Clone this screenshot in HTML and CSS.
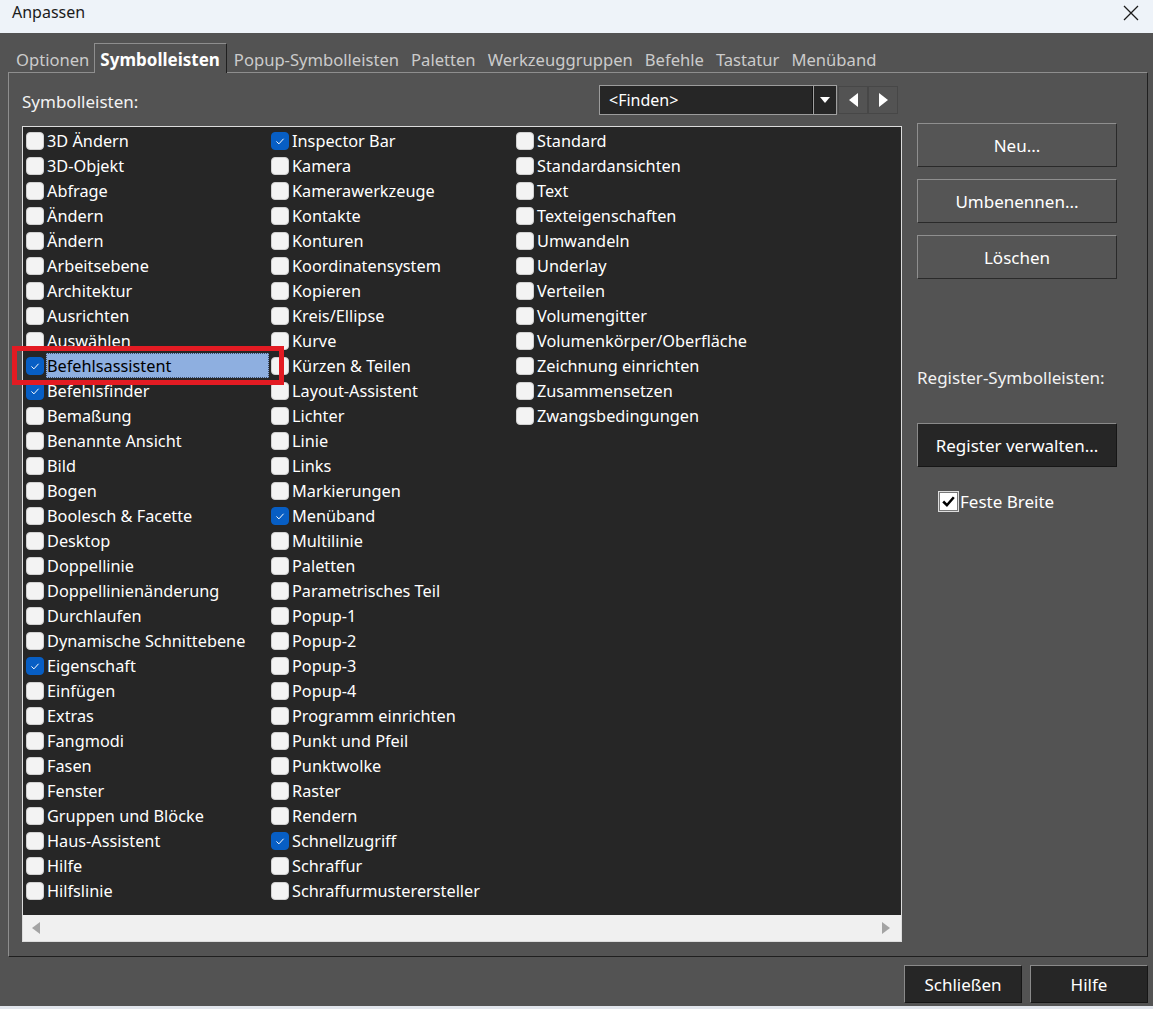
FILE: index.html
```html
<!DOCTYPE html>
<html lang="de">
<head>
<meta charset="UTF-8">
<title>Anpassen</title>
<link rel="stylesheet" href="styles.css">
</head>
<body>

<div class="titlebar">
    <span class="title">Anpassen</span>
    <svg class="close" width="16" height="16" viewBox="0 0 16 16"><path d="M1 1 L15 15 M15 1 L1 15" stroke="#1b1b1b" stroke-width="1.3" fill="none"/></svg>
</div>

<div class="dialog">
    <div class="tabs">
        <span class="tab">Optionen</span>
        <span class="tab active">Symbolleisten</span>
        <span class="tab">Popup-Symbolleisten</span>
        <span class="tab">Paletten</span>
        <span class="tab">Werkzeuggruppen</span>
        <span class="tab">Befehle</span>
        <span class="tab">Tastatur</span>
        <span class="tab">Menüband</span>
    </div>

    <div class="panel">
        <div class="left">
            <div class="toprow">
                <span class="label">Symbolleisten:</span>
                <div class="combo">
                    <span class="combo-text">&lt;Finden&gt;</span>
                    <span class="combo-drop"><svg width="10" height="6" viewBox="0 0 10 6"><path d="M0 0 H10 L5 6 Z" fill="#fff"/></svg></span>
                </div>
                <span class="navbtn"><svg width="9" height="14" viewBox="0 0 9 14"><path d="M9 0 V14 L0 7 Z" fill="#fff"/></svg></span>
                <span class="navbtn"><svg width="9" height="14" viewBox="0 0 9 14"><path d="M0 0 V14 L9 7 Z" fill="#fff"/></svg></span>
            </div>

            <div class="listbox">
                <div class="columns">
                    <div class="col">
                        <div class="item"><span class="cb"></span><span class="text">3D Ändern</span></div>
                        <div class="item"><span class="cb"></span><span class="text">3D-Objekt</span></div>
                        <div class="item"><span class="cb"></span><span class="text">Abfrage</span></div>
                        <div class="item"><span class="cb"></span><span class="text">Ändern</span></div>
                        <div class="item"><span class="cb"></span><span class="text">Ändern</span></div>
                        <div class="item"><span class="cb"></span><span class="text">Arbeitsebene</span></div>
                        <div class="item"><span class="cb"></span><span class="text">Architektur</span></div>
                        <div class="item"><span class="cb"></span><span class="text">Ausrichten</span></div>
                        <div class="item"><span class="cb"></span><span class="text">Auswählen</span></div>
                        <div class="item"><span class="cb on"><svg viewBox="0 0 18 18"><path d="M5 9.5 L7.8 12.2 L13 6.5" /></svg></span><span class="text selected">Befehlsassistent</span></div>
                        <div class="item"><span class="cb on"><svg viewBox="0 0 18 18"><path d="M5 9.5 L7.8 12.2 L13 6.5" /></svg></span><span class="text">Befehlsfinder</span></div>
                        <div class="item"><span class="cb"></span><span class="text">Bemaßung</span></div>
                        <div class="item"><span class="cb"></span><span class="text">Benannte Ansicht</span></div>
                        <div class="item"><span class="cb"></span><span class="text">Bild</span></div>
                        <div class="item"><span class="cb"></span><span class="text">Bogen</span></div>
                        <div class="item"><span class="cb"></span><span class="text">Boolesch &amp; Facette</span></div>
                        <div class="item"><span class="cb"></span><span class="text">Desktop</span></div>
                        <div class="item"><span class="cb"></span><span class="text">Doppellinie</span></div>
                        <div class="item"><span class="cb"></span><span class="text">Doppellinienänderung</span></div>
                        <div class="item"><span class="cb"></span><span class="text">Durchlaufen</span></div>
                        <div class="item"><span class="cb"></span><span class="text">Dynamische Schnittebene</span></div>
                        <div class="item"><span class="cb on"><svg viewBox="0 0 18 18"><path d="M5 9.5 L7.8 12.2 L13 6.5" /></svg></span><span class="text">Eigenschaft</span></div>
                        <div class="item"><span class="cb"></span><span class="text">Einfügen</span></div>
                        <div class="item"><span class="cb"></span><span class="text">Extras</span></div>
                        <div class="item"><span class="cb"></span><span class="text">Fangmodi</span></div>
                        <div class="item"><span class="cb"></span><span class="text">Fasen</span></div>
                        <div class="item"><span class="cb"></span><span class="text">Fenster</span></div>
                        <div class="item"><span class="cb"></span><span class="text">Gruppen und Blöcke</span></div>
                        <div class="item"><span class="cb"></span><span class="text">Haus-Assistent</span></div>
                        <div class="item"><span class="cb"></span><span class="text">Hilfe</span></div>
                        <div class="item"><span class="cb"></span><span class="text">Hilfslinie</span></div>
                    </div>
                    <div class="col">
                        <div class="item"><span class="cb on"><svg viewBox="0 0 18 18"><path d="M5 9.5 L7.8 12.2 L13 6.5" /></svg></span><span class="text">Inspector Bar</span></div>
                        <div class="item"><span class="cb"></span><span class="text">Kamera</span></div>
                        <div class="item"><span class="cb"></span><span class="text">Kamerawerkzeuge</span></div>
                        <div class="item"><span class="cb"></span><span class="text">Kontakte</span></div>
                        <div class="item"><span class="cb"></span><span class="text">Konturen</span></div>
                        <div class="item"><span class="cb"></span><span class="text">Koordinatensystem</span></div>
                        <div class="item"><span class="cb"></span><span class="text">Kopieren</span></div>
                        <div class="item"><span class="cb"></span><span class="text">Kreis/Ellipse</span></div>
                        <div class="item"><span class="cb"></span><span class="text">Kurve</span></div>
                        <div class="item"><span class="cb"></span><span class="text">Kürzen &amp; Teilen</span></div>
                        <div class="item"><span class="cb"></span><span class="text">Layout-Assistent</span></div>
                        <div class="item"><span class="cb"></span><span class="text">Lichter</span></div>
                        <div class="item"><span class="cb"></span><span class="text">Linie</span></div>
                        <div class="item"><span class="cb"></span><span class="text">Links</span></div>
                        <div class="item"><span class="cb"></span><span class="text">Markierungen</span></div>
                        <div class="item"><span class="cb on"><svg viewBox="0 0 18 18"><path d="M5 9.5 L7.8 12.2 L13 6.5" /></svg></span><span class="text">Menüband</span></div>
                        <div class="item"><span class="cb"></span><span class="text">Multilinie</span></div>
                        <div class="item"><span class="cb"></span><span class="text">Paletten</span></div>
                        <div class="item"><span class="cb"></span><span class="text">Parametrisches Teil</span></div>
                        <div class="item"><span class="cb"></span><span class="text">Popup-1</span></div>
                        <div class="item"><span class="cb"></span><span class="text">Popup-2</span></div>
                        <div class="item"><span class="cb"></span><span class="text">Popup-3</span></div>
                        <div class="item"><span class="cb"></span><span class="text">Popup-4</span></div>
                        <div class="item"><span class="cb"></span><span class="text">Programm einrichten</span></div>
                        <div class="item"><span class="cb"></span><span class="text">Punkt und Pfeil</span></div>
                        <div class="item"><span class="cb"></span><span class="text">Punktwolke</span></div>
                        <div class="item"><span class="cb"></span><span class="text">Raster</span></div>
                        <div class="item"><span class="cb"></span><span class="text">Rendern</span></div>
                        <div class="item"><span class="cb on"><svg viewBox="0 0 18 18"><path d="M5 9.5 L7.8 12.2 L13 6.5" /></svg></span><span class="text">Schnellzugriff</span></div>
                        <div class="item"><span class="cb"></span><span class="text">Schraffur</span></div>
                        <div class="item"><span class="cb"></span><span class="text">Schraffurmusterersteller</span></div>
                    </div>
                    <div class="col">
                        <div class="item"><span class="cb"></span><span class="text">Standard</span></div>
                        <div class="item"><span class="cb"></span><span class="text">Standardansichten</span></div>
                        <div class="item"><span class="cb"></span><span class="text">Text</span></div>
                        <div class="item"><span class="cb"></span><span class="text">Texteigenschaften</span></div>
                        <div class="item"><span class="cb"></span><span class="text">Umwandeln</span></div>
                        <div class="item"><span class="cb"></span><span class="text">Underlay</span></div>
                        <div class="item"><span class="cb"></span><span class="text">Verteilen</span></div>
                        <div class="item"><span class="cb"></span><span class="text">Volumengitter</span></div>
                        <div class="item"><span class="cb"></span><span class="text">Volumenkörper/Oberfläche</span></div>
                        <div class="item"><span class="cb"></span><span class="text">Zeichnung einrichten</span></div>
                        <div class="item"><span class="cb"></span><span class="text">Zusammensetzen</span></div>
                        <div class="item"><span class="cb"></span><span class="text">Zwangsbedingungen</span></div>
                    </div>
                </div>
                <div class="hscroll">
                    <svg width="9" height="12" viewBox="0 0 9 12"><path d="M8 0 V12 L0 6 Z" fill="#a3a3a3"/></svg>
                    <svg width="9" height="12" viewBox="0 0 9 12"><path d="M1 0 V12 L9 6 Z" fill="#a3a3a3"/></svg>
                </div>
                <!-- annotation frame -->
                <div class="marker"></div>
            </div>
        </div>

        <div class="right">
            <div class="btn">Neu...</div>
            <div class="btn">Umbenennen...</div>
            <div class="btn">Löschen</div>
            <div class="label reg-label">Register-Symbolleisten:</div>
            <div class="btn dark">Register verwalten...</div>
            <div class="fixed">
                <span class="classic-cb"><svg viewBox="0 0 16 16"><path d="M3 8 L6.5 11.5 L13 4" /></svg></span>
                <span>Feste Breite</span>
            </div>
        </div>
    </div>

    <div class="footer">
        <div class="btn dark footer-btn">Schließen</div>
        <div class="btn dark footer-btn">Hilfe</div>
    </div>
</div>

</body>
</html>
```

FILE: styles.css
```css
body {
    margin: 0;
    width: 1153px;
    height: 1009px;
    overflow: hidden;
    font-family: "Noto Sans", "Open Sans", sans-serif;
    background-color: #e1e5ec;
}
.titlebar {
    height: 33px;
    box-sizing: border-box;
    background-color: #eef3f9;
    display: flex;
    justify-content: space-between;
    align-items: flex-start;
    padding: 1px 14px 0 12px;
    color: #1b1b1b;
    font-size: 16px;
    line-height: 22px;
}
.close {
    margin-top: 4px;
}
.dialog {
    height: 973px;
    box-sizing: border-box;
    background-color: #535353;
    padding: 10px 5px 0 8px;
}
.tabs {
    display: flex;
    height: 29px;
    padding-left: 2px;
    position: relative;
    z-index: 1;
}
.tab {
    padding: 0 6px;
    font-size: 16.6px;
    line-height: 33px;
    color: #cbcbcb;
    white-space: nowrap;
}
.tab.active {
    color: #fff;
    font-weight: bold;
    padding: 0 6px 0 5px;
    margin: 0 1px 0 -1px;
    background-color: #535353;
    border-top: 1px solid #8e8e8e;
    border-left: 1px solid #8e8e8e;
    border-right: 1px solid #1f1f1f;
    height: 30px;
    box-sizing: border-box;
    line-height: 31px;
    font-size: 17px;
}
.panel {
    height: 885px;
    box-sizing: border-box;
    border: 1px solid;
    border-color: #8e8e8e #1f1f1f #1f1f1f #8e8e8e;
    display: flex;
    gap: 15px;
    padding: 12px 30px 13px 13px;
}
.left {
    width: 880px;
    display: flex;
    flex-direction: column;
}
.toprow {
    height: 30px;
    display: flex;
    align-items: center;
    margin-bottom: 11px;
    padding-right: 4px;
}
.label {
    color: #f2f2f2;
    font-size: 17px;
}
.toprow .label {
    flex: 1;
    padding-top: 3px;
}
.combo {
    width: 238px;
    height: 30px;
    box-sizing: border-box;
    border: 1px solid #9c9c9c;
    border-right: none;
    background-color: #262626;
    display: flex;
}
.combo-text {
    flex: 1;
    color: #fff;
    font-size: 16px;
    line-height: 29px;
    padding-left: 9px;
    border-right: 1px solid #111;
}
.combo-drop {
    width: 22px;
    border: 1px solid #a0a0a0;
    margin: -1px 0;
    display: flex;
    align-items: center;
    justify-content: center;
}
.navbtn {
    width: 30px;
    height: 28px;
    box-sizing: border-box;
    border: 1px solid #474747;
    margin-left: 1px;
    display: flex;
    align-items: center;
    justify-content: center;
}
.navbtn + .navbtn {
    margin-left: 0;
}
.listbox {
    height: 816px;
    box-sizing: border-box;
    border: 1px solid #dcdcdc;
    background-color: #262626;
    display: flex;
    flex-direction: column;
    position: relative;
}
.columns {
    flex: 1;
    display: flex;
    padding-top: 1px;
}
.col {
    width: 245px;
}
.item {
    height: 25px;
    display: flex;
    align-items: center;
}
.cb {
    width: 18px;
    height: 18px;
    box-sizing: border-box;
    margin: 0 3px 0 3px;
    border-radius: 4px;
    background-color: #f3f3f3;
    border: 1px solid #d0d0d0;
    flex-shrink: 0;
}
.cb.on {
    background-color: #075ec4;
    border-color: #075ec4;
}
.cb svg {
    display: block;
    width: 16px;
    height: 16px;
    fill: none;
    stroke: #fff;
    stroke-width: 1.1;
}
.text {
    color: #fff;
    font-size: 16.3px;
    white-space: nowrap;
}
.text.selected {
    flex: 1;
    margin-right: -1px;
    height: 25px;
    line-height: 24px;
    box-sizing: border-box;
    margin-left: -1px;
    background-color: #8eafe0;
    color: #000;
    border: 1px dotted #3a4a66;
}
.hscroll {
    height: 26px;
    background-color: #f0f0f0;
    display: flex;
    justify-content: space-between;
    align-items: center;
    padding: 0 11px 0 9px;
}
.marker {
    position: absolute;
    left: -11px;
    top: 219px;
    width: 272px;
    height: 39px;
    box-sizing: border-box;
    border: 5px solid #e31b23;
}
.right {
    width: 200px;
    padding-top: 38px;
    display: flex;
    flex-direction: column;
}
.btn {
    height: 44px;
    box-sizing: border-box;
    background-color: #555;
    border: 1px solid;
    border-color: #8f8f8f #2a2a2a #2a2a2a #8f8f8f;
    color: #fff;
    font-size: 17px;
    display: flex;
    align-items: center;
    justify-content: center;
    margin-bottom: 12px;
}
.btn.dark {
    background-color: #262626;
    border-color: #8a8a8a #161616 #161616 #8a8a8a;
}
.reg-label {
    margin-top: 75px;
    line-height: 24px;
    margin-bottom: 33px;
}
.fixed {
    margin-top: 11px;
    padding-left: 22px;
    display: flex;
    align-items: center;
    color: #fff;
    font-size: 17px;
}
.classic-cb {
    width: 19px;
    height: 19px;
    box-sizing: border-box;
    background-color: #fff;
    border: 1px solid #777;
    outline: 1px solid #ddd;
    margin-right: 2px;
}
.classic-cb svg {
    display: block;
    width: 17px;
    height: 17px;
    fill: none;
    stroke: #000;
    stroke-width: 2.4;
}
.footer {
    display: flex;
    justify-content: flex-end;
    gap: 8px;
    margin-top: 8px;
}
.footer-btn {
    width: 118px;
    height: 38px;
    margin-bottom: 0;
}
```
